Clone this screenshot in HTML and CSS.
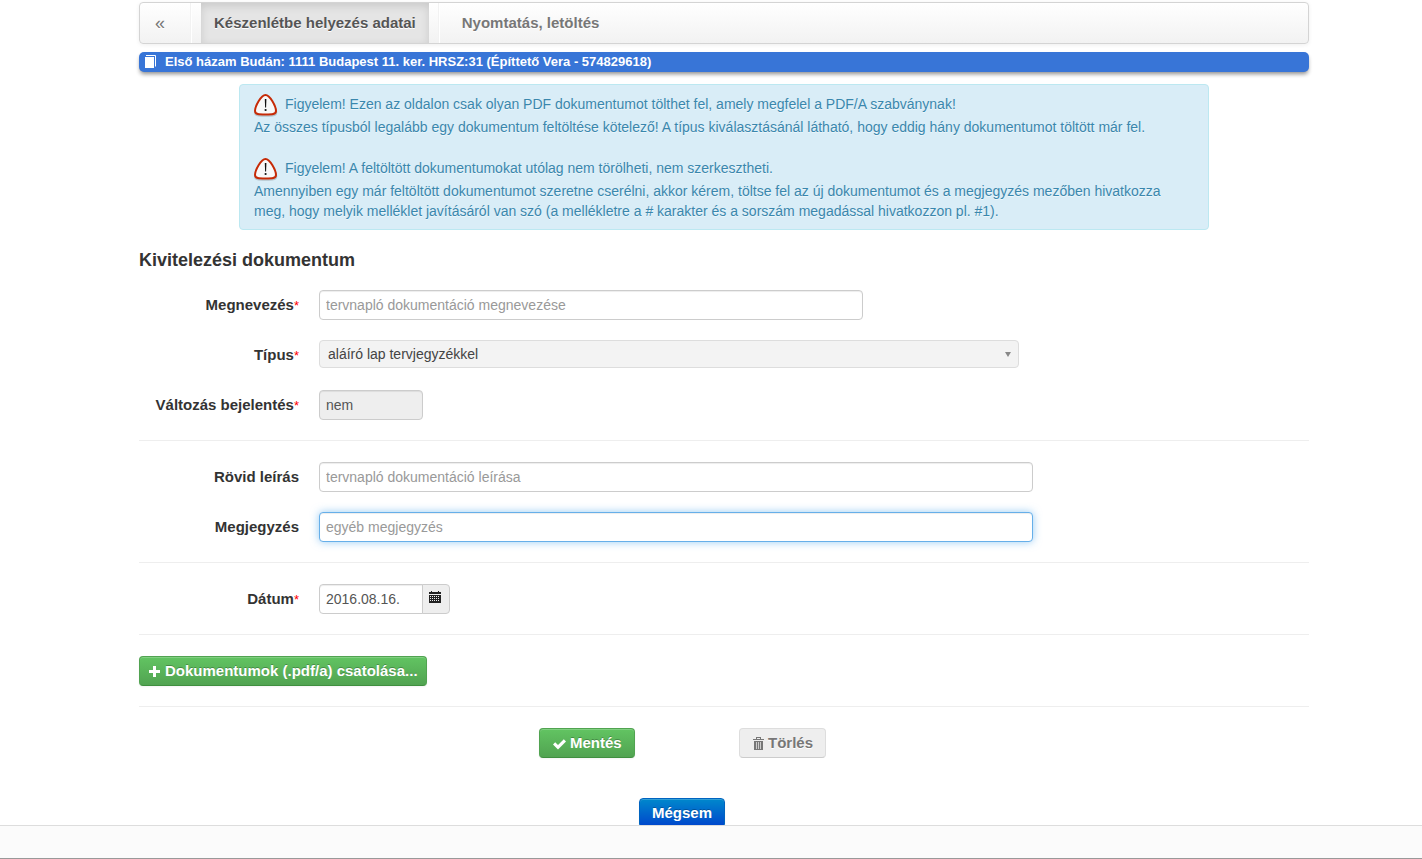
FILE: index.html
```html
<!DOCTYPE html>
<html lang="hu">
<head>
<meta charset="utf-8">
<title>Kivitelezési dokumentum</title>
<link rel="stylesheet" href="styles.css">
</head>
<body>
<svg class="sprite" aria-hidden="true">
  <symbol id="warning" viewBox="0 0 24 24">
    <path d="M11.500 3.500C15 3.500 22.500 15 22.500 19.500C22.500 23 18 23 11.500 23S.8 23 .8 19.500C.8 15 8 3.500 11.500 3.500Z" fill="none" stroke="#8d9aa0" stroke-opacity=".5" stroke-width="1.500"/>
    <path d="M11.500 2C16 2 22 13.500 22 18C22 21.500 18 21.500 11.500 21.500S1 21.500 1 18C1 13.500 7 2 11.500 2Z" fill="#f8f8f8" stroke="#c62a06" stroke-width="2"/>
    <path d="M10.800 6h1.600l-.3 8.500h-1z" fill="#111"/><circle cx="11.600" cy="17" r="1.100" fill="#111"/>
  </symbol>
</svg>
<main class="page">
  <nav class="navbar">
    <a class="nav-link nav-back" href="#">«</a>
    <span class="divider"></span>
    <a class="nav-link nav-active" href="#">Készenlétbe helyezés adatai</a>
    <span class="divider"></span>
    <a class="nav-link" href="#">Nyomtatás, letöltés</a>
  </nav>

  <div class="project-bar">
    <svg class="book-icon" viewBox="0 0 12 14" aria-hidden="true"><path d="M0 2h9v11H0z" fill="#fff"/><path d="M1 .5h9.500V11.500" fill="none" stroke="#fff"/></svg>
    <span>Első házam Budán: 1111 Budapest 11. ker. HRSZ:31 (Építtető Vera - 574829618)</span>
  </div>

  <section class="alert">
    <p class="alert-lead"><svg class="warning-icon" aria-hidden="true"><use href="#warning"/></svg>Figyelem! Ezen az oldalon csak olyan PDF dokumentumot tölthet fel, amely megfelel a PDF/A szabványnak!</p>
    <p class="alert-text">Az összes típusból legalább egy dokumentum feltöltése kötelező! A típus kiválasztásánál látható, hogy eddig hány dokumentumot töltött már fel.</p>
    <p class="alert-lead alert-next"><svg class="warning-icon" aria-hidden="true"><use href="#warning"/></svg>Figyelem! A feltöltött dokumentumokat utólag nem törölheti, nem szerkesztheti.</p>
    <p class="alert-text">Amennyiben egy már feltöltött dokumentumot szeretne cserélni, akkor kérem, töltse fel az új dokumentumot és a megjegyzés mezőben hivatkozza meg, hogy melyik melléklet javításáról van szó (a mellékletre a # karakter és a sorszám megadással hivatkozzon pl. #1).</p>
  </section>

  <form>
    <h1 class="title">Kivitelezési dokumentum</h1>
    <div class="fields">
      <div class="row">
        <label for="name">Megnevezés<span class="required">*</span></label>
        <input id="name" class="control control-medium" type="text" placeholder="tervnapló dokumentáció megnevezése">
      </div>
      <div class="row">
        <label for="type">Típus<span class="required">*</span></label>
        <span class="select-wrap">
          <select id="type" class="select"><option>aláíró lap tervjegyzékkel</option></select>
          <svg class="select-arrow" viewBox="0 0 6 5" aria-hidden="true"><path d="M0 0h6L3 5z"/></svg>
        </span>
      </div>
      <div class="row">
        <label for="change">Változás bejelentés<span class="required">*</span></label>
        <input id="change" class="control control-small" type="text" value="nem" readonly>
      </div>
    </div>
    <div class="fields">
      <div class="row">
        <label for="desc">Rövid leírás</label>
        <input id="desc" class="control control-wide" type="text" placeholder="tervnapló dokumentáció leírása">
      </div>
      <div class="row">
        <label for="note">Megjegyzés</label>
        <input id="note" class="control control-wide control-focus" type="text" placeholder="egyéb megjegyzés">
      </div>
    </div>
    <div class="fields">
      <div class="row">
        <label for="date">Dátum<span class="required">*</span></label>
        <span class="date-group">
          <input id="date" class="control control-small" type="text" value="2016.08.16.">
          <button class="date-button" type="button" aria-label="Naptár"><svg class="calendar-icon" viewBox="0 0 12 12" aria-hidden="true"><path d="M0 1h2V0h1v1h6V0h1v1h2v2H0zM0 4h12v8H0z" fill="#222"/><path d="M1 5.500h10M1 7.500h10M1 9.500h10" stroke="#eee" stroke-dasharray="1 1"/></svg></button>
        </span>
      </div>
    </div>
    <div class="fields">
      <button class="btn btn-green btn-attach" type="button"><svg class="plus-icon" viewBox="0 0 11 11" aria-hidden="true"><path d="M4 0h3v4h4v3H7v4H4V7H0V4h4z"/></svg>Dokumentumok (.pdf/a) csatolása...</button>
    </div>
    <div class="actions">
      <div class="action-cell"><button class="btn btn-green" type="button"><svg class="check-icon" viewBox="0 0 13 12" aria-hidden="true"><path d="M0 6.500 2.200 4.300 5 7 10.800 1.200 13 3.400 5 11.400z"/></svg>Mentés</button></div>
      <div class="action-cell"><button class="btn btn-grey" type="button" disabled><svg class="trash-icon" viewBox="0 0 11 13" aria-hidden="true"><path d="M0 2h3V0h5v2h3v1H0zM4 1v1h3V1zM1 4h9v9H1z" fill-rule="evenodd"/><path d="M3.500 5v7M5.500 5v7M7.500 5v7" stroke="#ccc"/></svg>Törlés</button></div>
    </div>
    <div class="cancel"><button class="btn btn-blue" type="button">Mégsem</button></div>
  </form>
</main>
<footer class="footer"></footer>
</body>
</html>
```
FILE: styles.css
```css
* { box-sizing: border-box; }
body {
  margin: 0;
  background: #fff;
  color: #333;
  font: 14px/20px "Liberation Sans", Arial, sans-serif;
}
p, h1 { margin: 0; }
button, input, select { font: inherit; margin: 0; }
svg { flex: none; }
.sprite { position: absolute; width: 0; height: 0; }
.page { padding: 2px 0 34px 26px; display: grid; grid-template-columns: minmax(0, 1170px); justify-content: center; }

.navbar {
  display: flex;
  border: 1px solid #d4d4d4;
  border-radius: 4px;
  background: linear-gradient(#fff, #f2f2f2);
  box-shadow: 0 1px 4px rgba(0, 0, 0, .065);
}
.nav-link {
  padding: 10px 13px;
  color: #777;
  font-size: 15px;
  font-weight: bold;
  text-decoration: none;
  text-shadow: 0 1px 0 #fff;
}
.nav-back { padding: 10px 16px 10px 15px; font-size: 18px; font-weight: normal; }
.nav-active { color: #555; background: #e5e5e5; box-shadow: inset 0 3px 8px rgba(0, 0, 0, .125); }
.divider { margin: 0 9px; border-left: 1px solid #f2f2f2; border-right: 1px solid #fff; }

.project-bar {
  display: flex;
  align-items: center;
  gap: 8px;
  margin-top: 8px;
  padding: 0 6px;
  border-radius: 5px;
  background: #3875d7;
  box-shadow: 0 3px 4px -1px rgba(0, 0, 0, .45);
  color: #fff;
  font-size: 13px;
  font-weight: bold;
}
.book-icon { width: 12px; height: 14px; }

.alert {
  margin: 12px 100px 20px;
  padding: 8px 35px 8px 14px;
  border: 1px solid #bce8f1;
  border-radius: 4px;
  background: #d9edf7;
  color: #3a87ad;
  text-shadow: 0 1px 0 rgba(255, 255, 255, .5);
}
.alert-lead { display: flex; gap: 7px; line-height: 22px; }
.alert-next { margin-top: 20px; }
.warning-icon { width: 24px; height: 24px; }

.title { font-size: 18px; line-height: 20px; padding-bottom: 20px; }
.fields {
  display: grid;
  gap: 20px;
  justify-items: start;
  padding-bottom: 20px;
  margin-bottom: 21px;
  border-bottom: 1px solid #eee;
}
.row { display: grid; grid-template-columns: 160px minmax(0, 1fr); column-gap: 20px; width: 100%; min-height: 30px; }
.row label { padding-top: 5px; text-align: right; font-size: 15px; font-weight: bold; }
.required { color: #f00; font-size: 13px; font-weight: normal; }
.control {
  height: 30px;
  max-width: 100%;
  padding: 4px 6px;
  border: 1px solid #ccc;
  border-radius: 4px;
  background: #fff;
  color: #555;
  box-shadow: inset 0 1px 1px rgba(0, 0, 0, .075);
  outline: none;
}
.control::placeholder { color: #999; opacity: 1; }
.control-small { width: 104px; }
.control-medium { width: 544px; }
.control-wide { width: 714px; }
.control:read-only { background: #eee; }
.control-focus, .control:focus { border-color: #66afe9; box-shadow: inset 0 1px 1px rgba(0, 0, 0, .075), 0 0 8px rgba(82, 168, 236, .6); }
.select-wrap { position: relative; width: 700px; max-width: 100%; height: 28px; }
.select {
  appearance: none;
  width: 100%;
  height: 28px;
  padding: 0 24px 0 8px;
  border: 1px solid #ddd;
  border-radius: 4px;
  background: #f3f3f3;
  color: #444;
}
.select-arrow { position: absolute; right: 8px; top: 12px; width: 6px; height: 5px; fill: #888; pointer-events: none; }
.date-group { display: flex; }
.date-group .control { border-radius: 4px 0 0 4px; }
.date-button {
  width: 28px;
  height: 30px;
  margin-left: -1px;
  padding: 0 0 4px 6px;
  border: 1px solid #ccc;
  border-radius: 0 4px 4px 0;
  background: #eee;
  display: flex;
  align-items: center;
}
.calendar-icon { width: 12px; height: 12px; }

.btn {
  display: inline-flex;
  align-items: center;
  height: 30px;
  padding: 0 12px;
  border: 1px solid;
  border-radius: 4px;
  font-size: 15px;
  font-weight: bold;
  color: #fff;
  text-shadow: 0 -1px 0 rgba(0, 0, 0, .25);
  box-shadow: inset 0 1px 0 rgba(255, 255, 255, .2), 0 1px 2px rgba(0, 0, 0, .05);
}
.btn svg { fill: currentColor; }
.btn-green { background: linear-gradient(#62c462, #51a351); border-color: #51a351 #51a351 #3f8f3f; }
.btn-attach { padding: 0 8px; }
.btn-grey { background: #eee; border-color: #ddd #ddd #ccc; color: #777; text-shadow: 0 1px 0 #fff; box-shadow: none; }
.btn-blue { background: linear-gradient(#08c, #04c); border-color: #0064c0; }
.plus-icon { width: 11px; height: 11px; margin: 1px 5px 0 1px; }
.check-icon { width: 13px; height: 12px; margin: 1px 4px 0 1px; }
.trash-icon { width: 11px; height: 13px; margin: 0 4px 0 1px; }
.actions { display: grid; grid-template-columns: 200px 200px; padding-left: 400px; }
.action-cell { display: flex; }
.cancel { display: flex; padding: 40px 0 0 500px; }

.footer {
  position: fixed;
  inset: auto 0 0;
  height: 34px;
  border-top: 1px solid #ddd;
  border-bottom: 1px solid #999;
  background: #fbfbfb;
}
```
